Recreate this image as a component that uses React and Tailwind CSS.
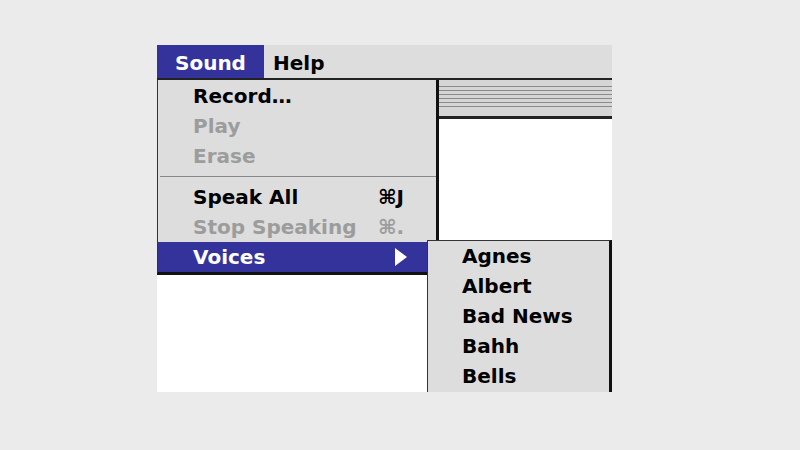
import React from "react";

const font = { fontFamily: '"DejaVu Sans", "Liberation Sans", sans-serif' };

const MenuRow = ({ label, shortcut, disabled, active, arrow }) => (
  <div
    className={`flex items-center h-[30px] pl-[35px] text-[20px] font-bold ${
      arrow ? "pr-[29px]" : "pr-[12px]"
    } ${active ? "bg-[#33339b] text-white" : disabled ? "text-[#9c9c9c]" : "text-black"}`}
  >
    <span className="flex-1">{label}</span>
    {shortcut && <span className="w-[46px]">{shortcut}</span>}
    {arrow && (
      <svg width="12" height="18" viewBox="0 0 12 18">
        <path d="M0 0 L12 9 L0 18 Z" fill="white" />
      </svg>
    )}
  </div>
);

export default function App() {
  const voices = ["Agnes", "Albert", "Bad News", "Bahh", "Bells"];
  return (
    <div className="w-[800px] h-[450px] bg-[#ebebeb] pt-[45px] pl-[157px]" style={font}>
      <div className="relative w-[455px] h-[347px] overflow-hidden bg-white">
        {/* menu bar */}
        <div className="flex h-[35px] bg-[#dddddd] border-b-2 border-[#222] text-[20px] font-bold">
          <div className="w-[107px] bg-[#33339b] text-white pl-[18px] pt-[3px]">Sound</div>
          <div className="pl-[9px] pt-[3px] text-black">Help</div>
        </div>
        {/* window title bar */}
        <div className="h-[39px] bg-[#d6d6d6] border-b-[3px] border-[#222] flex flex-col pt-[6px] gap-[3px]">
          <div className="h-px bg-[#8a8a8a]" />
          <div className="h-px bg-[#8a8a8a]" />
          <div className="h-px bg-[#8a8a8a]" />
          <div className="h-px bg-[#8a8a8a]" />
          <div className="h-px bg-[#8a8a8a]" />
          <div className="h-px bg-[#8a8a8a]" />
        </div>

        {/* Sound menu */}
        <div className="absolute left-0 top-[35px] w-[282px] bg-[#dddddd] border-l border-[#333] border-r-[3px] border-r-[#111] border-b-[3px] border-b-[#111] pt-[1px]">
          <MenuRow label="Record…" />
          <MenuRow label="Play" disabled />
          <MenuRow label="Erase" disabled />
          <div className="h-[11px] flex items-center pl-[2px]">
            <div className="w-full h-px bg-[#888]" />
          </div>
          <MenuRow label="Speak All" shortcut="⌘J" />
          <MenuRow label="Stop Speaking" shortcut="⌘." disabled />
          <MenuRow label="Voices" active arrow />
        </div>

        {/* Voices submenu */}
        <div className="absolute left-[270px] top-[195px] w-[185px] h-[170px] bg-[#dddddd] border-l border-t border-[#333] border-r-[3px] border-r-[#111]">
          {voices.map((v) => (
            <div key={v} className="h-[30px] flex items-center pl-[34px] text-[20px] font-bold text-black">
              {v}
            </div>
          ))}
        </div>
      </div>
    </div>
  );
}
